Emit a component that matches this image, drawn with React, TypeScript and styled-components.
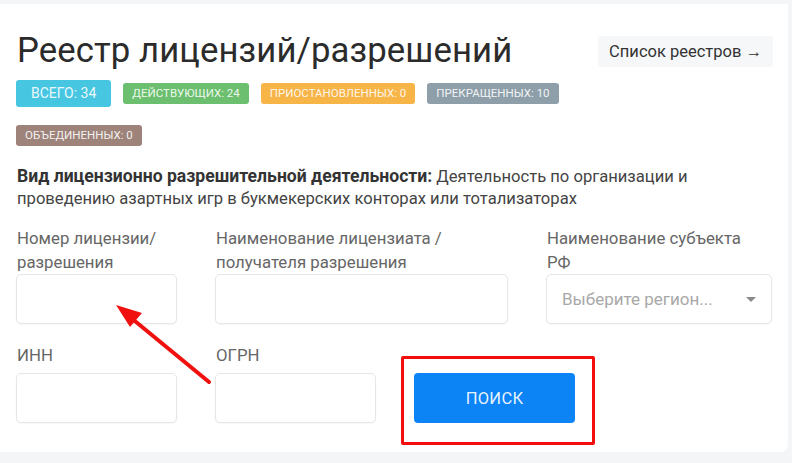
import styled, { createGlobalStyle } from 'styled-components';

const GlobalStyle = createGlobalStyle`
  * { box-sizing: border-box; }
  html, body { margin: 0; padding: 0; }
  body {
    background: #f4f5f6;
    font-family: Roboto, "Noto Sans", "Liberation Sans", sans-serif;
    color: #333;
  }
`;

const badges = [
  { text: 'Всего: 34', color: '#47c6e2', active: true },
  { text: 'Действующих: 24', color: '#6bbf6f' },
  { text: 'Приостановленных: 0', color: '#f7b447' },
  { text: 'Прекращенных: 10', color: '#8e9fa9' },
  { text: 'Объединенных: 0', color: '#9d837a' },
];

export default function App() {
  return (
    <>
      <GlobalStyle />
      <Card>
        <Header>
          <HeaderMain>
            <Title>Реестр лицензий/разрешений</Title>
            <BadgeList>
              {badges.map((b) => (
                <Badge key={b.text} $color={b.color} $active={b.active}>
                  {b.text}
                </Badge>
              ))}
            </BadgeList>
          </HeaderMain>
          <LinkButton>Список реестров →</LinkButton>
        </Header>

        <Description>
          <b>Вид лицензионно разрешительной деятельности:</b> Деятельность по организации и
          проведению азартных игр в букмекерских конторах или тотализаторах
        </Description>

        <FormRow>
          <Field $width={161}>
            <Label>
              Номер лицензии/
              <br />
              разрешения
            </Label>
            <Input />
          </Field>
          <Field $width={293}>
            <Label>
              Наименование лицензиата /
              <br />
              получателя разрешения
            </Label>
            <Input />
          </Field>
          <Field $width={226}>
            <Label>
              Наименование субъекта
              <br />
              РФ
            </Label>
            <Select>
              <span>Выберите регион...</span>
              <Caret />
            </Select>
          </Field>
        </FormRow>

        <FormRow>
          <Field $width={161}>
            <Label $spaced>ИНН</Label>
            <Input />
          </Field>
          <Field $width={161}>
            <Label $spaced>ОГРН</Label>
            <Input />
          </Field>
          <ButtonSlot>
            <SearchButton>Поиск</SearchButton>
            <Highlight />
          </ButtonSlot>
        </FormRow>

        <Arrow viewBox="0 0 120 100" width="120" height="100">
          <line x1="101" y1="86" x2="22" y2="21" stroke="#f0110f" strokeWidth="4" strokeLinecap="round" />
          <polygon points="8,9 34,17 22,31" fill="#f0110f" />
        </Arrow>
      </Card>
    </>
  );
}

const Card = styled.div`
  position: relative;
  margin-top: 4px;
  width: 788px;
  height: 448px;
  background: #fff;
  border-radius: 0 0 8px 0;
  padding: 25px 15px 0 16px;
`;

const Header = styled.div`
  display: flex;
  justify-content: space-between;
  align-items: flex-start;
`;

const HeaderMain = styled.div`
  width: 570px;
`;

const Title = styled.h1`
  margin: 0 0 0 1px;
  font-size: 34.7px;
  font-weight: 400;
  line-height: 42px;
  color: #2b2b2b;
  letter-spacing: 0.1px;
`;

const BadgeList = styled.div`
  display: flex;
  flex-wrap: wrap;
  align-items: center;
  column-gap: 12px;
  row-gap: 18px;
  margin-top: 9px;
`;

const Badge = styled.span<{ $color: string; $active?: boolean }>`
  display: inline-block;
  background: ${(p) => p.$color};
  color: rgba(255, 255, 255, 0.9);
  text-transform: uppercase;
  font-size: ${(p) => (p.$active ? '14px' : '11.5px')};
  line-height: ${(p) => (p.$active ? '27px' : '21px')};
  height: ${(p) => (p.$active ? '27px' : '21px')};
  padding: ${(p) => (p.$active ? '0 15px' : '0 9px')};
  border-radius: 3px;
  white-space: nowrap;
`;

const LinkButton = styled.div`
  margin-top: 7px;
  height: 31px;
  line-height: 31px;
  padding: 0 11px;
  background: #f6f7f9;
  border-radius: 3px;
  font-size: 16.5px;
  color: #333;
  white-space: nowrap;
`;

const Description = styled.p`
  margin: 19px 0 0 1px;
  font-size: 16.6px;
  line-height: 22px;
  color: #444;
  width: 690px;

  b {
    color: #333;
    font-weight: 700;
    font-size: 17.6px;
  }
`;

const FormRow = styled.div`
  display: flex;
  align-items: flex-end;
  gap: 38px;
  margin-top: 16px;

  & + & {
    margin-top: 19px;
  }
`;

const Field = styled.div<{ $width: number }>`
  width: ${(p) => p.$width}px;
  display: flex;
  flex-direction: column;
`;

const Label = styled.div<{ $spaced?: boolean }>`
  font-size: 16.8px;
  line-height: 24px;
  color: #666;
  margin-left: 1px;
  margin-bottom: ${(p) => (p.$spaced ? '6px' : '0')};
  white-space: nowrap;
`;

const Input = styled.div`
  height: 50px;
  border: 1px solid #e6e6e6;
  border-radius: 5px;
  box-shadow: 0 1px 2px rgba(0, 0, 0, 0.04);
  background: #fff;
`;

const Select = styled(Input)`
  display: flex;
  align-items: center;
  justify-content: space-between;
  padding: 0 15px 0 15px;
  font-size: 17px;
  color: #a8a8a8;
`;

const Caret = styled.span`
  width: 0;
  height: 0;
  border-left: 5px solid transparent;
  border-right: 5px solid transparent;
  border-top: 5px solid #8a8a8a;
`;

const ButtonSlot = styled.div`
  position: relative;
`;

const SearchButton = styled.button`
  display: block;
  width: 161px;
  height: 50px;
  border: none;
  border-radius: 4px;
  background: #0d84f6;
  color: rgba(255, 255, 255, 0.92);
  font-family: inherit;
  font-size: 16.5px;
  text-transform: uppercase;
  letter-spacing: 0.3px;
`;

const Highlight = styled.div`
  position: absolute;
  left: -13px;
  top: -17px;
  right: -20px;
  bottom: -22px;
  border: 3px solid #f50d0d;
  border-radius: 2px;
  pointer-events: none;
`;

const Arrow = styled.svg`
  position: absolute;
  left: 108px;
  top: 292px;
  overflow: visible;
  pointer-events: none;
`;
